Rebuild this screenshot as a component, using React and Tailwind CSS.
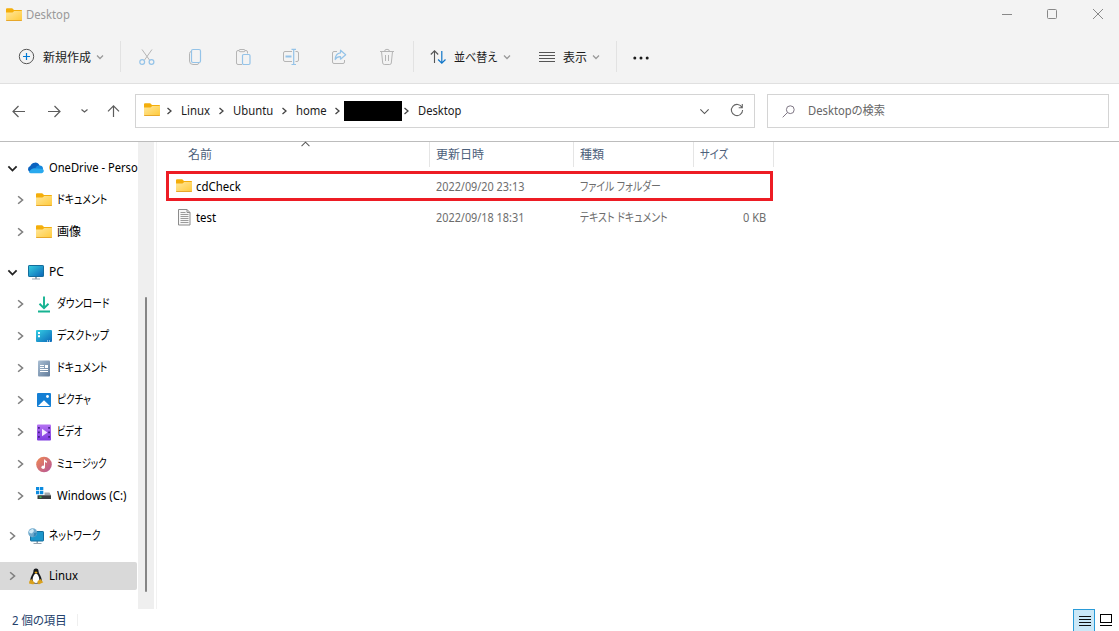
function FolderIcon({ className = '' }) {
  return (
    <svg width="17" height="14" viewBox="0 0 17 14" className={`shrink-0 ${className}`}>
      <defs>
        <linearGradient id="folder" x1="0" y1="0" x2="1" y2="1">
          <stop offset="0" stopColor="#ffe79c" />
          <stop offset="1" stopColor="#ffca3a" />
        </linearGradient>
      </defs>
      <path d="M0 1.2Q0 .2 1 .2h5.2L8 2h7.2q.8 0 .8.8V7H0z" fill="#f4ae0b" />
      <path d="M0 4.4h6.5L8.2 3H16v9q0 .8-.8.8H.8q-.8 0-.8-.8z" fill="url(#folder)" />
      <path d="M.2 12.5h15.6" stroke="#e7a72a" />
    </svg>
  );
}

function Chevron({ dir = 'right', size = 8, width = 1.3, className = '' }) {
  const paths = {
    right: 'M2.5 1 6 4 2.5 7',
    down: 'M1 2.5 4 5.5 7 2.5',
    up: 'M.5 5.5 4 2 7.5 5.5',
  };
  return (
    <svg width={size} height={size} viewBox="0 0 8 8" fill="none" stroke="currentColor" strokeWidth={width} className={`shrink-0 ${className}`}>
      <path d={paths[dir]} />
    </svg>
  );
}

function OneDriveIcon() {
  return (
    <svg width="17" height="12" viewBox="0 0 17 12" className="-ml-0.5 shrink-0">
      <path d="M3.5 10.5A3.4 3.4 0 0 1 3.3 4 5 5 0 0 1 12.6 3.6L9 10z" fill="#0a63c0" />
      <path d="M8.5 5.5q1.7-2.3 4-1.9a3.7 3.7 0 0 1 3.5 4L11 9z" fill="#1488dd" />
      <path d="M2 10.2Q4 6 8.2 6.2L15.7 7a2.3 2.3 0 0 1-1.6 4.2H4q-1.3 0-2-1z" fill="#29a9ee" />
    </svg>
  );
}

function PcIcon() {
  return (
    <svg width="17" height="16" viewBox="0 0 17 16">
      <defs>
        <linearGradient id="screen" x1="0" y1="0" x2="1" y2="1">
          <stop offset="0" stopColor="#36d0e0" />
          <stop offset="1" stopColor="#0a63b8" />
        </linearGradient>
      </defs>
      <path d="M7 13h2v2H7zM4 14.5h8v1H4z" fill="#9aa5b1" />
      <rect x=".5" y="1.5" width="15" height="11" rx=".6" fill="url(#screen)" stroke="#146d9c" />
    </svg>
  );
}

function DownloadIcon() {
  return (
    <svg width="17" height="17" viewBox="0 0 17 17" fill="none" stroke="#16b392" strokeWidth="1.9">
      <path d="M8 .5v11.5M3.5 7.8 8 12.2l4.5-4.4M2 15.5h12" />
    </svg>
  );
}

function DesktopIcon() {
  return (
    <svg width="17" height="14" viewBox="0 0 17 14">
      <defs>
        <linearGradient id="desk" x1="0" y1="0" x2="1" y2="1">
          <stop offset="0" stopColor="#35cfe4" />
          <stop offset="1" stopColor="#0b68b9" />
        </linearGradient>
      </defs>
      <rect y="1" width="16" height="12" rx="1" fill="url(#desk)" />
      <path d="M2 3h2v2H2zM2 6.2h2v2H2zM11 11.5h1v1h-1zM13 11.5h1v1h-1z" fill="#fff" />
    </svg>
  );
}

function DocumentIcon() {
  return (
    <svg width="17" height="17" viewBox="0 0 17 17">
      <defs>
        <linearGradient id="doc" x1="0" y1="0" x2="1" y2="1">
          <stop offset="0" stopColor="#aabfd4" />
          <stop offset="1" stopColor="#617b9a" />
        </linearGradient>
      </defs>
      <rect x="2" y=".5" width="12" height="16" rx="1" fill="url(#doc)" />
      <path d="M4 5.5h4M4 7.5h4M4 9.5h8M4 11.5h8" stroke="#fff" />
      <path d="M9 5h3v3H9z" fill="#fff" />
    </svg>
  );
}

function PictureIcon() {
  return (
    <svg width="17" height="16" viewBox="0 0 17 16">
      <rect x="1" y="1" width="14" height="14" rx="1" fill="#147fd4" />
      <path d="M2 14 8 8.2l6 5.8z" fill="#fff" />
      <circle cx="11.5" cy="4.5" r="1.4" fill="#fff" />
    </svg>
  );
}

function VideoIcon() {
  return (
    <svg width="17" height="17" viewBox="0 0 17 17">
      <defs>
        <linearGradient id="video" x1="0" y1="0" x2="0" y2="1">
          <stop offset="0" stopColor="#b573f2" />
          <stop offset="1" stopColor="#7e3be0" />
        </linearGradient>
      </defs>
      <rect x="1" y=".5" width="14" height="16" rx="1" fill="url(#video)" />
      <path d="M2 3h1.8v1.8H2zM2 7.5h1.8v1.8H2zM2 12h1.8v1.8H2zM12.2 3H14v1.8h-1.8zM12.2 7.5H14v1.8h-1.8zM12.2 12H14v1.8h-1.8z" fill="#47208c" />
      <path d="M6 4.7 11.4 8.5 6 12.3z" fill="#f4ecff" />
    </svg>
  );
}

function MusicIcon() {
  return (
    <svg width="17" height="17" viewBox="0 0 17 17">
      <defs>
        <linearGradient id="music" x1="0" y1="0" x2="1" y2="1">
          <stop offset="0" stopColor="#f08a51" />
          <stop offset="1" stopColor="#b4549b" />
        </linearGradient>
      </defs>
      <circle cx="8" cy="8.5" r="7.8" fill="url(#music)" />
      <path d="M8 3.5h1q.3 1.5 2 2v1.3Q9.6 6.7 9 6v5H8z" fill="#fff" />
      <circle cx="7.2" cy="11.2" r="1.8" fill="#fff" />
    </svg>
  );
}

function DriveIcon() {
  return (
    <svg width="17" height="14" viewBox="0 0 17 14" className="-mt-1">
      <path d="M0 0h3.3v3.3H0zM4 0h3.3v3.3H4zM0 4h3.3v3.3H0zM4 4h3.3v3.3H4z" fill="#0b8be0" />
      <path d="M8.5 5.5h5l1.5 3H2L3 8h5.5z" fill="#a3a8ad" />
      <path d="M1.5 8.3H15V12H1.5z" fill="#3a3d40" />
      <path d="M3.5 9.5h2v1.2h-2z" fill="#45e04a" />
    </svg>
  );
}

function NetworkIcon() {
  return (
    <svg width="17" height="17" viewBox="0 0 17 17">
      <path d="M8.5 13H10v2H8.5zM5.5 15h8v1h-8z" fill="#97a3ae" />
      <rect x="2.5" y="3.5" width="13" height="9.5" rx=".6" fill="#1b96cb" stroke="#146d9c" />
      <circle cx="4.7" cy="4.7" r="4.5" fill="#6fa9cc" />
      <path d="M1 3Q3 1 5 .7L6 3 4 5.5 1.5 5z" fill="#cfe9f6" />
      <path d="M6 5l3-.5Q8.5 8 5.5 9z" fill="#3587b7" />
    </svg>
  );
}

function TuxIcon() {
  return (
    <svg width="17" height="17" viewBox="0 0 17 17">
      <path d="M8 .5c1.8 0 2.6 1.3 2.6 3 0 2.2 3.2 4.8 3.2 9.5L11 15.5H5L2.3 13c0-4.7 3.1-7.3 3.1-9.5 0-1.7.8-3 2.6-3z" fill="#17191c" />
      <path d="M8 5.5c1.5 0 3.3 3.4 3.3 6S10 15 8 15s-3.4-.9-3.4-3.5 1.9-6 3.4-6z" fill="#fff" />
      <path d="M6.3 4.2 8 3.5l1.7.7L8 5.7z" fill="#e8a917" />
      <path d="M3.3 11 6.7 15q-.3 1.7-2.4 1.2L1 15.5 1.4 13zM12.8 11 9.6 13v2.5q.8 1.2 2.2.4L15.3 14.2 14 13z" fill="#d9a01c" />
    </svg>
  );
}

function TextFileIcon() {
  return (
    <svg width="13" height="17" viewBox="0 0 13 17">
      <path d="M.5.5H9l3 3V16H.5z" fill="#f7f7f7" stroke="#8c8c8c" />
      <path d="M9 .5v3h3" fill="none" stroke="#8c8c8c" />
      <path d="M2.5 3.5h5M2.5 5.5h8M2.5 7.5h8M2.5 9.5h8M2.5 11.5h8M2.5 13.5h8" stroke="#9b9b9b" />
    </svg>
  );
}

const navItems = [
  { label: 'OneDrive - Perso', icon: <OneDriveIcon />, open: true, squeeze: 'scale-x-[0.93]' },
  { label: 'ドキュメント', icon: <FolderIcon />, child: true, squeeze: 'scale-x-[0.82]' },
  { label: '画像', icon: <FolderIcon />, child: true },
  { label: 'PC', icon: <PcIcon />, open: true, gap: true },
  { label: 'ダウンロード', icon: <DownloadIcon />, child: true, squeeze: 'scale-x-[0.8]' },
  { label: 'デスクトップ', icon: <DesktopIcon />, child: true, squeeze: 'scale-x-[0.83]' },
  { label: 'ドキュメント', icon: <DocumentIcon />, child: true, squeeze: 'scale-x-[0.82]' },
  { label: 'ピクチャ', icon: <PictureIcon />, child: true, squeeze: 'scale-x-[0.8]' },
  { label: 'ビデオ', icon: <VideoIcon />, child: true, squeeze: 'scale-x-[0.76]' },
  { label: 'ミュージック', icon: <MusicIcon />, child: true, squeeze: 'scale-x-[0.78]' },
  { label: 'Windows (C:)', icon: <DriveIcon />, child: true, squeeze: 'scale-x-[0.96]' },
  { label: 'ネットワーク', icon: <NetworkIcon />, gap: true, squeeze: 'scale-x-[0.81]' },
  { label: 'Linux', icon: <TuxIcon />, gap: true, selected: true, squeeze: 'scale-x-[0.95]' },
];

function NavItem({ label, icon, open, child, gap, selected, squeeze = '' }) {
  return (
    <div className={`flex h-8 items-center ${gap ? 'mt-2' : ''}`}>
      <div className={`flex h-7 w-[138px] items-center rounded-r-xs ${child ? 'pl-[15px]' : 'pl-[7px]'} ${selected ? 'mr-px bg-[#d9d9d9]' : ''}`}>
        {open ? (
          <Chevron dir="down" size={11} width={1.3} className="-mr-px text-[#222]" />
        ) : (
          <Chevron size={10} width={1.3} className="text-[#808080]" />
        )}
        <span className="ml-[11px] flex w-[17px] shrink-0 justify-center">{icon}</span>
        <span className={`ml-1 origin-left whitespace-nowrap text-black ${squeeze}`}>{label}</span>
      </div>
    </div>
  );
}

function TitleBar() {
  return (
    <div className="flex h-[30px] items-center pl-1.5 text-[#999]">
      <FolderIcon className="-mt-px" />
      <span className="ml-[3px] origin-left scale-x-[0.94]">Desktop</span>
      <svg width="104" height="12" viewBox="0 0 104 12" fill="none" stroke="#888" className="-mt-1 mr-[14px] ml-auto">
        <path d="M1 7.5h10" />
        <rect x="46.5" y="2.5" width="9" height="9" rx="1" />
        <path d="m92 2 10 10m0-10-10 10" />
      </svg>
    </div>
  );
}

function Separator({ className }) {
  return <div className={`h-[31px] w-px bg-[#e2e2e2] ${className}`} />;
}

function Toolbar() {
  return (
    <div className="flex h-[53px] items-center pl-[18px] text-[#1b1b1b]">
      <svg width="17" height="17" viewBox="0 0 17 17" fill="none">
        <circle cx="8.5" cy="8.5" r="7.2" stroke="#555" />
        <path d="M8.5 5v7M5 8.5h7" stroke="#0078d4" strokeWidth="1.2" />
      </svg>
      <span className="ml-2 w-12 pt-0.5 whitespace-nowrap">新規作成</span>
      <Chevron dir="down" className="ml-[5px] text-[#999]" />
      <Separator className="ml-4" />
      <div className="ml-[18px] flex items-center gap-8">
        {/* Cut */}
        <svg width="16" height="18" viewBox="0 0 16 18" fill="none">
          <path d="M3 1.5 10.5 12M13 1.5 5.5 12" stroke="#b5b5b5" />
          <circle cx="3.2" cy="14" r="2.4" stroke="#94c3e8" strokeWidth="1.2" />
          <circle cx="12.5" cy="14" r="2.4" stroke="#94c3e8" strokeWidth="1.2" />
        </svg>
        {/* Copy */}
        <svg width="16" height="18" viewBox="0 0 16 18" fill="none">
          <path d="M4 3.5q-1.5.5-1.5 2V13q0 3.5 3.5 3.5h4q1.500 0 2-1.500" stroke="#b5b5b5" />
          <rect x="4.5" y="1.5" width="9" height="13" rx="1.5" stroke="#94c3e8" strokeWidth="1.2" />
        </svg>
        {/* Paste */}
        <svg width="16" height="18" viewBox="0 0 16 18" fill="none">
          <path d="M7 16.5H3q-1.5 0-1.5-1.5V4q0-1.5 1.5-1.5h8q1.5 0 1.5 1.5v1.5" stroke="#b5b5b5" />
          <rect x="4" y="1.5" width="6" height="2.2" rx="1" fill="#f3f3f3" stroke="#b5b5b5" />
          <rect x="7.5" y="6.5" width="7.5" height="10" rx="1.2" stroke="#94c3e8" strokeWidth="1.2" />
        </svg>
        {/* Rename */}
        <svg width="16" height="18" viewBox="0 0 16 18" fill="none">
          <path d="M9 3.5H2Q.5 3.5.5 5v7q0 1.5 1.5 1.5h7M12.5 3.5H14q1.5 0 1.5 1.5v7q0 1.5-1.5 1.5h-1.5" stroke="#b5b5b5" />
          <path d="M2.5 8.5h6" stroke="#94c3e8" strokeWidth="2" />
          <path d="M10.7 1.5v15M8.5 1.3H13M8.5 16.5H13" stroke="#94c3e8" strokeWidth="1.2" />
        </svg>
        {/* Share */}
        <svg width="16" height="18" viewBox="0 0 16 18" fill="none">
          <path d="M6 3.5H3Q1.5 3.5 1.5 5v9q0 1.5 1.5 1.5h9q1.5 0 1.5-1.5v-2" stroke="#b5b5b5" />
          <path d="M9.5 2.2 14.7 6.7l-5.2 4.5V8.6Q6 8.3 4.2 11.5 4.5 5.3 9.5 4.8z" stroke="#94c3e8" strokeWidth="1.2" strokeLinejoin="round" />
        </svg>
        {/* Delete */}
        <svg width="16" height="18" viewBox="0 0 16 18" fill="none" stroke="#b5b5b5">
          <path d="M1 3.5h14M5.5 3.5q0-2.2 2.5-2.2t2.5 2.2M2.5 3.5 3.7 15q.2 1.5 1.6 1.5h5.4q1.4 0 1.6-1.5L13.5 3.5M6.5 7v6M9.5 7v6" />
        </svg>
      </div>
      <Separator className="ml-[18px]" />
      <svg width="17" height="16" viewBox="0 0 17 16" fill="none" className="ml-4">
        <path d="M4.5 14V1.8M.8 5.5 4.5 1.8l3.7 3.7" stroke="#555" strokeWidth="1.1" />
        <path d="M11.8 2v12.2M8.1 10.5l3.7 3.7 3.7-3.7" stroke="#0f75c8" strokeWidth="1.2" />
      </svg>
      <span className="ml-[7px] w-[45px] pt-0.5 whitespace-nowrap"><span className="inline-block origin-left scale-x-[0.92]">並べ替え</span></span>
      <Chevron dir="down" className="ml-1 text-[#999]" />
      <svg width="16" height="12" viewBox="0 0 16 12" stroke="#555" className="ml-7">
        <path d="M0 1.5h16M0 4.5h16M0 7.5h16M0 10.5h16" />
      </svg>
      <span className="ml-2 w-6 pt-0.5 whitespace-nowrap">表示</span>
      <Chevron dir="down" className="ml-[5px] text-[#999]" />
      <Separator className="ml-4" />
      <svg width="17" height="4" viewBox="0 0 17 4" fill="#1b1b1b" className="mt-0.5 ml-4">
        <circle cx="1.8" cy="2" r="1.5" />
        <circle cx="8" cy="2" r="1.5" />
        <circle cx="14.2" cy="2" r="1.5" />
      </svg>
    </div>
  );
}

function AddressRow() {
  return (
    <div className="flex h-[58px] items-start border-b border-[#bcbcbc] pt-[10px] pr-[10px]">
      <svg width="123" height="34" viewBox="0 0 123 34" fill="none" stroke="#5c5c5c" strokeWidth="1.2">
        <path d="M25 17.5H13M18.5 12 13 17.5l5.5 5.5" />
        <path d="M48 17.5h12M54.5 12l5.5 5.5-5.5 5.5" />
        <path d="m81.5 15.5 3 2.5 3-2.5" />
        <path d="M113.5 23V12M108 17.3l5.5-5.5 5.5 5.5" />
      </svg>
      <div className="ml-3 flex h-[34px] w-[620px] items-center border border-[#d4d4d4] pl-2 text-[#1b1b1b]">
        <FolderIcon className="-mt-0.5" />
        <Chevron className="ml-1 text-[#444]" />
        <span className="ml-2 w-[29px] origin-left scale-x-[0.95]">Linux</span>
        <Chevron className="ml-[7px] text-[#444]" />
        <span className="ml-2 w-10 origin-left scale-x-[0.94]">Ubuntu</span>
        <Chevron className="ml-[7px] text-[#444]" />
        <span className="ml-2 w-[31px] origin-left scale-x-[0.94]">home</span>
        <Chevron className="ml-[6px] text-[#444]" />
        <span className="ml-[3px] h-5 w-[58px] bg-black" />
        <Chevron className="text-[#444]" />
        <span className="ml-2 origin-left scale-x-[0.93]">Desktop</span>
        <Chevron dir="down" size={11} width={0.8} className="mr-5 ml-auto text-[#555]" />
        <svg width="14" height="14" viewBox="0 0 14 14" fill="none" stroke="#666" strokeWidth="1.1" className="mr-[10px] -mt-0.5">
          <path d="M12 4.5A5.6 5.6 0 1 0 12.6 7M12.3 1v3.7H8.7" />
        </svg>
      </div>
      <div className="ml-3 flex h-[34px] flex-1 items-center border border-[#d4d4d4] pl-[14px] text-[#666]">
        <svg width="13" height="13" viewBox="0 0 13 13" fill="none" stroke="#7e7684">
          <circle cx="8.3" cy="4.7" r="3.9" />
          <path d="M5.5 7.5.7 12.3" />
        </svg>
        <span className="ml-[13px] origin-left scale-x-[0.935]">Desktopの検索</span>
      </div>
    </div>
  );
}

const files = [
  { name: 'cdCheck', date: '2022/09/20 23:13', type: 'ファイル フォルダー', size: '', folder: true },
  { name: 'test', date: '2022/09/18 18:31', type: 'テキスト ドキュメント', size: '0 KB' },
];

function FileRow({ file }) {
  return (
    <div
      className={`ml-[9px] flex w-[607px] items-center text-[#6d6d6d] ${
        file.folder ? 'h-[30px] border-[3px] border-[#ed1c24] pl-[7px]' : 'h-[34px] pr-[3px] pl-[10px]'
      }`}
    >
      <span className={`flex w-4 shrink-0 justify-center ${file.folder ? '' : '-mt-0.5'}`}>{file.folder ? <FolderIcon /> : <TextFileIcon />}</span>
      <div className={`ml-1 flex flex-1 ${file.folder ? 'pt-0.5' : ''}`}>
        <span className="w-60 text-black"><span className="inline-block origin-left scale-x-[0.95]">{file.name}</span></span>
        <span className="w-36 whitespace-nowrap"><span className="inline-block origin-left scale-x-[0.905]">{file.date}</span></span>
        <span className="w-[120px] whitespace-nowrap"><span className="inline-block origin-left scale-x-[0.825]">{file.type}</span></span>
        <span className="w-[66px] text-right"><span className="inline-block origin-right scale-x-[0.92]">{file.size}</span></span>
      </div>
    </div>
  );
}

function FileList() {
  return (
    <div className="ml-0.5 flex-1 border-l border-[#f2f2f2]">
      <div className="flex h-[25px] text-[#4c607a]">
        <div className="relative w-[273px] border-r border-[#e5e5e5] pt-[5px] pl-[31px]">
          名前
          <Chevron dir="up" size={9} width={0.9} className="absolute -top-0.5 left-36 text-[#555]" />
        </div>
        <div className="w-36 border-r border-[#e5e5e5] pt-[5px] pl-1.5">更新日時</div>
        <div className="w-[120px] border-r border-[#e5e5e5] pt-[5px] pl-1.5">種類</div>
        <div className="w-20 border-r border-[#e5e5e5] pt-[5px] pl-1.5"><span className="inline-block origin-left scale-x-[0.86]">サイズ</span></div>
      </div>
      <div className="pt-1">
        {files.map((file) => (
          <FileRow key={file.name} file={file} />
        ))}
      </div>
    </div>
  );
}

export default function App() {
  return (
    <div className="flex h-[631px] w-[1119px] flex-col overflow-hidden bg-white font-['Noto_Sans','Noto_Sans_CJK_JP',sans-serif] text-xs leading-4 [font-feature-settings:'palt']">
      <div className="h-[84px] border-b border-[#e0e0e0] bg-[#f3f3f3]">
        <TitleBar />
        <Toolbar />
      </div>
      <AddressRow />
      <div className="flex h-[467px]">
        <div className="w-[138px] pt-2.5">
          {navItems.map((item, i) => (
            <NavItem key={i} {...item} />
          ))}
        </div>
        {/* Scrollbar */}
        <div className="flex w-4 justify-center bg-[#efefef] pt-[155px]">
          <div className="h-[295px] w-0.5 rounded-full bg-[#858585]" />
        </div>
        <FileList />
      </div>
      {/* Status bar */}
      <div className="flex h-[22px] items-center pl-3 text-[#24416b]">
        <span className="origin-left scale-x-[0.95] pt-0.5">2 個の項目</span>
        <div className="ml-[7px] h-3 w-px bg-[#efefef]" />
        <div className="ml-auto flex h-[22px] w-[22px] items-center justify-center border border-b-0 border-[#2a9bd8] bg-[#cbe8f7]">
          <svg width="12" height="11" viewBox="0 0 12 11" stroke="#111" className="mt-0.5 ml-0.5">
            <path d="M0 .5h12M0 3.5h12M0 6.5h12M0 9.5h12" />
          </svg>
        </div>
        <svg width="14" height="14" viewBox="0 0 14 14" fill="none" stroke="#000" className="mr-[6px] ml-1">
          <rect x="1.5" y="1.5" width="11" height="8" />
          <path d="M1 12.5h12" />
        </svg>
      </div>
    </div>
  );
}
